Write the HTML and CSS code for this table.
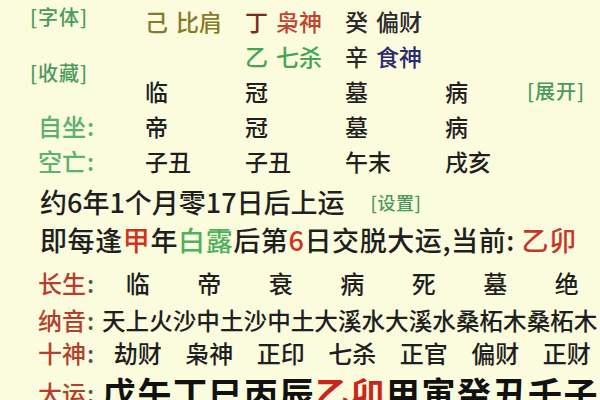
FILE: index.html
```html
<!DOCTYPE html>
<html lang="zh-CN">
<head>
<meta charset="utf-8">
<link rel="stylesheet" href="styles.css">
</head>
<body>
<div class="page">
  <div class="pillars">
    <div class="tag r1 c1">[字体]</div>
    <div class="cell r1 c2 olive"><span class="stem">己</span><span>比肩</span></div>
    <div class="cell r1 c3"><span class="stem dred">丁</span><span class="red">枭神</span></div>
    <div class="cell r1 c4 dark"><span class="stem">癸</span><span>偏财</span></div>

    <div class="tag tall c1">[收藏]</div>
    <div class="cell r2 c3 green"><span class="stem">乙</span><span>七杀</span></div>
    <div class="cell r2 c4"><span class="stem dark">辛</span><span class="navy">食神</span></div>

    <div class="cell r3 c2">临</div>
    <div class="cell r3 c3">冠</div>
    <div class="cell r3 c4">墓</div>
    <div class="cell r3 c5">病</div>
    <div class="tag r3 c6">[展开]</div>

    <div class="label lgreen r4 c1">自坐<span class="colon">:</span></div>
    <div class="cell r4 c2">帝</div>
    <div class="cell r4 c3">冠</div>
    <div class="cell r4 c4">墓</div>
    <div class="cell r4 c5">病</div>

    <div class="label lgreen r5 c1">空亡<span class="colon">:</span></div>
    <div class="cell r5 c2">子丑</div>
    <div class="cell r5 c3">子丑</div>
    <div class="cell r5 c4">午末</div>
    <div class="cell r5 c5">戌亥</div>
  </div>

  <div class="line first">约6年1个月零17日后上运<span class="tag small">[设置]</span></div>
  <div class="line second">即每逢<span class="hot">甲</span>年<span class="green">白露</span>后第<span class="hot">6</span>日交脱大运,当前: <span class="cur">乙卯</span></div>

  <div class="fortune">
    <div class="label lred">长生<span class="colon">:</span></div>
    <div class="mid">临</div><div class="mid">帝</div><div class="mid">衰</div><div class="mid">病</div><div class="mid">死</div><div class="mid">墓</div><div class="mid">绝</div>

    <div class="label lred">纳音<span class="colon">:</span></div>
    <div class="wide">天上火沙中土沙中土大溪水大溪水桑柘木桑柘木</div>

    <div class="label lred">十神<span class="colon">:</span></div>
    <div class="mid">劫财</div><div class="mid">枭神</div><div class="mid">正印</div><div class="mid">七杀</div><div class="mid">正官</div><div class="mid">偏财</div><div class="mid">正财</div>

    <div class="label lred big-label">大运<span class="colon">:</span></div>
    <div class="wide luck">戊午丁巳丙辰<span class="cur">乙卯</span>甲寅癸丑壬子</div>
  </div>
</div>
</body>
</html>
```
FILE: styles.css
```css
html, body {
  margin: 0;
  padding: 0;
}
body {
  width: 600px;
  height: 400px;
  overflow: hidden;
  background: #fbfbdd;
  font-family: "Noto Sans CJK SC", "Noto Sans", sans-serif;
  font-weight: 500;
  color: #1f1f1f;
}
.page {
  width: 600px;
  height: 400px;
  overflow: hidden;
}
.pillars {
  display: grid;
  grid-template-columns: 145px 100px 100px 100px 82px 1fr;
  grid-template-rows: repeat(5, 35px);
  padding-top: 3px;
  align-items: center;
}
.r1 { grid-row: 1; }
.r2 { grid-row: 2; }
.r3 { grid-row: 3; }
.r4 { grid-row: 4; }
.r5 { grid-row: 5; }
.tall { grid-row: 2 / span 2; }
.c1 { grid-column: 1; }
.c2 { grid-column: 2; }
.c3 { grid-column: 3; }
.c4 { grid-column: 4; }
.c5 { grid-column: 5; }
.c6 { grid-column: 6; }

.cell {
  font-size: 23px;
  line-height: 30px;
  white-space: nowrap;
}
.stem {
  margin-right: 8px;
}
.tag {
  font-size: 20px;
  line-height: 28px;
  color: #4a9a60;
  letter-spacing: 1px;
  white-space: nowrap;
}
.pillars .c1.tag {
  padding-left: 30px;
}
.r1.tag {
  align-self: start;
}
.label {
  font-size: 24px;
  line-height: 30px;
  white-space: nowrap;
}
.pillars .label {
  padding-left: 38px;
}
.colon {
  margin-left: 1px;
}
.lgreen { color: #5cb072; }
.lgreen .colon { color: #5cb072; }
.lred { color: #b53f2d; }
.lred .colon { color: #555; }

.olive { color: #877a2b; }
.dred { color: #7c2a1c; }
.red { color: #c4412e; }
.dark { color: #2a2a2a; }
.green { color: #43a456; }
.navy { color: #2b2c70; }

.line {
  font-size: 27px;
  line-height: 38px;
  padding-left: 40px;
  white-space: nowrap;
}
.line.first {
  margin-top: 5px;
}
.line.second {
  letter-spacing: 0.6px;
}
.tag.small {
  font-size: 18px;
  margin-left: 26px;
  vertical-align: 3px;
  letter-spacing: 0.5px;
}
.hot { color: #d2321f; }
.cur { color: #c4372a; }
.line .green { color: #4fb060; }

.fortune {
  display: grid;
  grid-template-columns: 64px repeat(7, 71.5px);
  grid-template-rows: 36px 37px 30px 50px;
  padding-left: 38px;
  margin-top: 6px;
  align-items: center;
}
.mid {
  font-size: 24px;
  line-height: 30px;
  text-align: center;
  white-space: nowrap;
}
.wide {
  grid-column: 2 / span 7;
  font-size: 23.6px;
  line-height: 30px;
  white-space: nowrap;
}
.luck {
  font-size: 34px;
  font-weight: 700;
  letter-spacing: 1.5px;
  line-height: 50px;
  color: #111;
}
.luck .cur { color: #c8261c; }
.big-label {
  line-height: 50px;
}
```
